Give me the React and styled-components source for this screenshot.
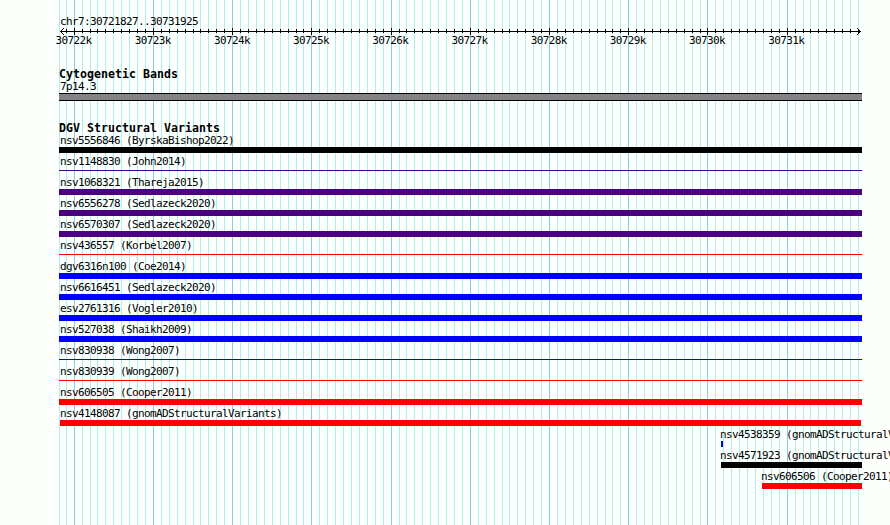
import React from "react";
import styled, { createGlobalStyle } from "styled-components";

const REGION_START = 30721827;
const REGION_END = 30731925;
const TRACK_WIDTH = 800;

const tracks = [
  { label: "nsv5556846 (ByrskaBishop2022)", color: "#000000" },
  { label: "nsv1148830 (John2014)", color: "#4b0082", thin: true },
  { label: "nsv1068321 (Thareja2015)", color: "#4b0082" },
  { label: "nsv6556278 (Sedlazeck2020)", color: "#4b0082" },
  { label: "nsv6570307 (Sedlazeck2020)", color: "#4b0082" },
  { label: "nsv436557 (Korbel2007)", color: "#ff0000", thin: true },
  { label: "dgv6316n100 (Coe2014)", color: "#0000ff" },
  { label: "nsv6616451 (Sedlazeck2020)", color: "#0000ff" },
  { label: "esv2761316 (Vogler2010)", color: "#0000ff" },
  { label: "nsv527038 (Shaikh2009)", color: "#0000ff" },
  { label: "nsv830938 (Wong2007)", color: "#0000ff", thin: true },
  { label: "nsv830939 (Wong2007)", color: "#ff0000", thin: true },
  { label: "nsv606505 (Cooper2011)", color: "#ff0000" },
  { label: "nsv4148087 (gnomADStructuralVariants)", color: "#ff0000", start: 1, width: 801, indent: 0 },
  { label: "nsv4538359 (gnomADStructuralVariants)", color: "#0000ff", start: 662, width: 2, indent: -1 },
  { label: "nsv4571923 (gnomADStructuralVariants)", color: "#000000", start: 662, width: 141, indent: -1 },
  { label: "nsv606506 (Cooper2011)", color: "#ff0000", start: 703, width: 100, indent: -1 },
];

const toX = (bp) =>
  Math.round(60 + ((bp - REGION_START) * TRACK_WIDTH) / (REGION_END - REGION_START));

const ticks = [];
for (let bp = 30721900; bp <= 30731900; bp += 100) {
  ticks.push({ bp, x: toX(bp), major: bp % 1000 === 0 });
}

const Grid = () => (
  <GridSvg width="890" height="525" shapeRendering="crispEdges">
    <rect x="59" y="0" width="1" height="525" fill="#afeeee" />
    {ticks.map((t) => (
      <rect key={t.bp} x={t.x} y="0" width="1" height="525" fill={t.major ? "#87ceeb" : "#afeeee"} />
    ))}
  </GridSvg>
);

const Ruler = () => (
  <RulerSvg width="890" height="9" shapeRendering="crispEdges">
    <rect x="60" y="4" width="801" height="1" />
    {ticks.map((t) => (
      <rect key={t.bp} x={t.x} y={t.major ? 1 : 2} width="1" height={t.major ? 7 : 4} />
    ))}
    {[1, 2, 3].map((d) => (
      <React.Fragment key={d}>
        <rect x={60 + d} y={4 - d} width="1" height="1" />
        <rect x={60 + d} y={4 + d} width="1" height="1" />
        <rect x={860 - d} y={4 - d} width="1" height="1" />
        <rect x={860 - d} y={4 + d} width="1" height="1" />
      </React.Fragment>
    ))}
  </RulerSvg>
);

const App = () => (
  <>
    <GlobalStyle />
    <Browser>
      <Grid />
      <Content>
        <Region>chr7:30721827..30731925</Region>
        <Ruler />
        <Scale>
          {ticks.filter((t) => t.major).map((t) => (
            <ScaleLabel key={t.bp}>{t.bp / 1000}k</ScaleLabel>
          ))}
        </Scale>
        <BandSection>
          <Title>Cytogenetic Bands</Title>
          <Label>7p14.3</Label>
          <Band />
        </BandSection>
        <VariantSection>
          <Title>DGV Structural Variants</Title>
          {tracks.map((track) => (
            <Track key={track.label} $start={track.start || 0}>
              <Label $indent={track.indent}>{track.label}</Label>
              <Bar $color={track.color} $thin={track.thin} $width={track.width} />
            </Track>
          ))}
        </VariantSection>
      </Content>
    </Browser>
  </>
);

const GlobalStyle = createGlobalStyle`
  body {
    margin: 0;
    background: #fdfffc;
    overflow: hidden;
  }
`;

const Browser = styled.div`
  position: relative;
  width: 890px;
  height: 525px;
  overflow: hidden;
  color: #000;
  font-family: "DejaVu Sans Mono", monospace;
  font-size: 11px;
  line-height: 13px;
  letter-spacing: -0.62px;
  white-space: pre;
`;

const GridSvg = styled.svg`
  position: absolute;
  inset: 0;
`;

const Content = styled.div`
  position: relative;
  padding-top: 15px;
`;

const Region = styled.div`
  height: 12px;
  padding-left: 60px;
`;

const RulerSvg = styled.svg`
  display: block;
`;

const Scale = styled.div`
  display: flex;
  height: 13px;
  margin-top: -2px;
  padding-left: 55.5px;
`;

const ScaleLabel = styled.span`
  flex: none;
  width: 79.2px;
`;

const BandSection = styled.section`
  margin: 21px 0 0 59px;
`;

const VariantSection = styled.section`
  margin: 21px 0 0 59px;
`;

const Title = styled.h2`
  height: 12px;
  margin: 0;
  font-size: 11.6px;
  line-height: 13px;
  letter-spacing: 0.016px;
`;

const Label = styled.div`
  height: 13px;
  margin-left: ${(props) => props.$indent ?? 1}px;
`;

const Band = styled.div`
  box-sizing: border-box;
  width: 803px;
  height: 8px;
  background: #848284;
  border: solid #000;
  border-width: 1px 0;
`;

const Track = styled.div`
  height: 21px;
  margin-left: ${(props) => props.$start}px;
`;

const Bar = styled.div`
  width: ${(props) => props.$width || 803}px;
  height: ${(props) => (props.$thin ? 1 : 6)}px;
  margin-top: ${(props) => (props.$thin ? 2 : 0)}px;
  background: ${(props) => props.$color};
`;

export default App;
